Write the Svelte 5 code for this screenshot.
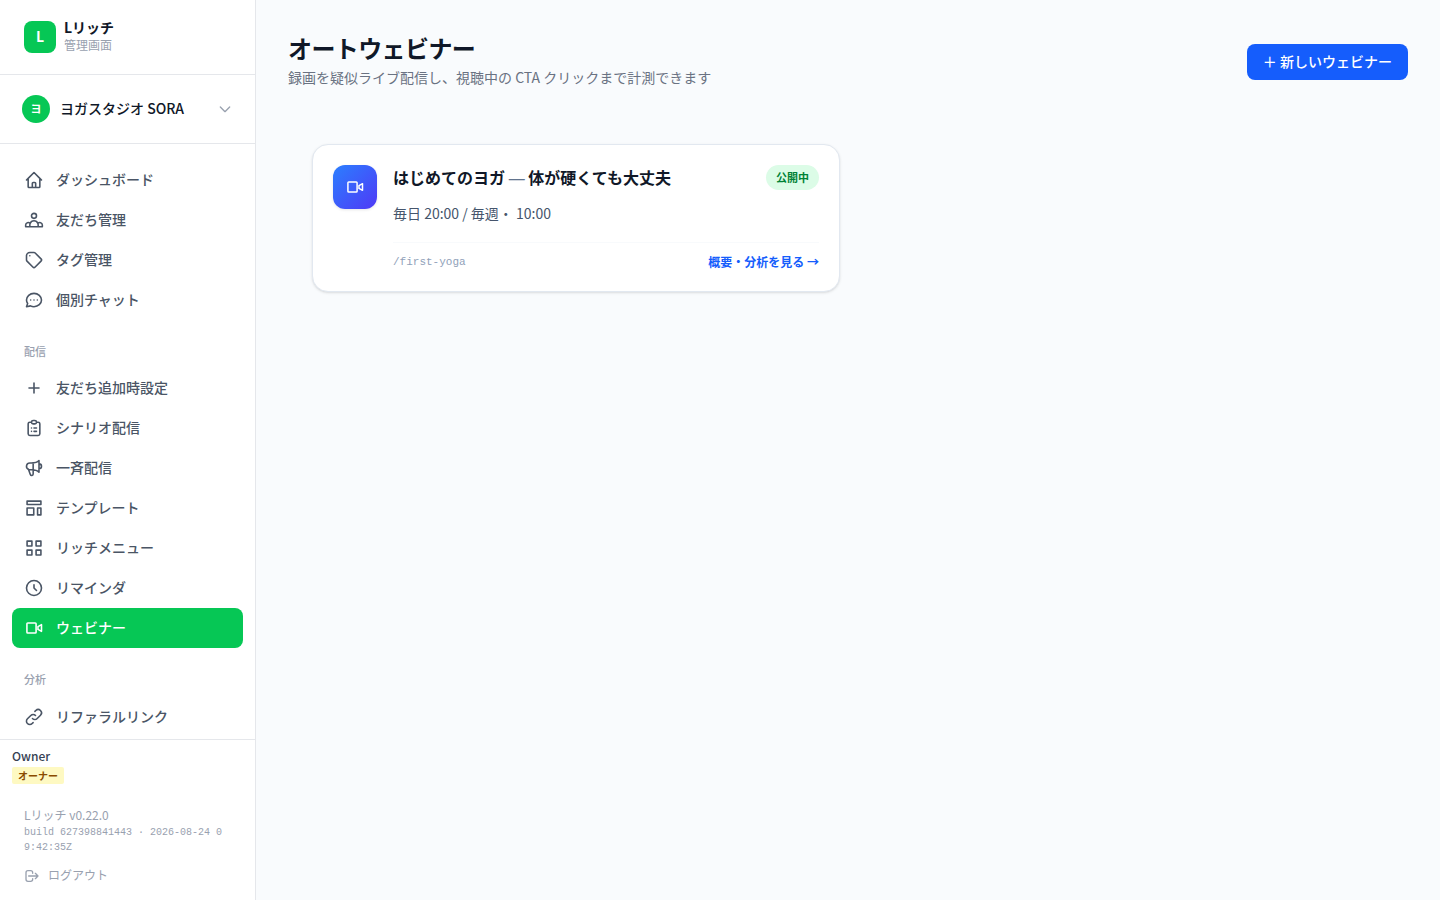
<script>
  const home = [
    { label: "ダッシュボード", d: "M3 12l2-2m0 0l7-7 7 7M5 10v10a1 1 0 001 1h3m10-11l2 2m-2-2v10a1 1 0 01-1 1h-3m-6 0a1 1 0 001-1v-4a1 1 0 011-1h2a1 1 0 011 1v4a1 1 0 001 1m-6 0h6" },
    { label: "友だち管理", d: "M17 20h5v-2a3 3 0 00-5.356-1.857M17 20H7m10 0v-2c0-.656-.126-1.283-.356-1.857M7 20H2v-2a3 3 0 015.356-1.857M7 20v-2c0-.656.126-1.283.356-1.857m0 0a5.002 5.002 0 019.288 0M15 7a3 3 0 11-6 0 3 3 0 016 0z" },
    { label: "タグ管理", d: "M7 7h.01M7 3h5c.512 0 1.024.195 1.414.586l7 7a2 2 0 010 2.828l-7 7a2 2 0 01-2.828 0l-7-7A1.994 1.994 0 013 12V7a4 4 0 014-4z" },
    { label: "個別チャット", d: "M8 12h.01M12 12h.01M16 12h.01M21 12c0 4.418-4.03 8-9 8a9.863 9.863 0 01-4.255-.949L3 20l1.395-3.72C3.512 15.042 3 13.574 3 12c0-4.418 4.03-8 9-8s9 3.582 9 8z" },
  ]
  const video = "M16.800 10.300L21 8v8l-4.200-2.300zM4.500 18h9a1 1 0 001-1V7a1 1 0 00-1-1h-9a1 1 0 00-1 1v10a1 1 0 001 1z"
  const delivery = [
    { label: "友だち追加時設定", d: "M12 6v6m0 0v6m0-6h6m-6 0H6" },
    { label: "シナリオ配信", d: "M9 5H7a2 2 0 00-2 2v12a2 2 0 002 2h10a2 2 0 002-2V7a2 2 0 00-2-2h-2M9 5a2 2 0 002 2h2a2 2 0 002-2M9 5a2 2 0 012-2h2a2 2 0 012 2m-3 7h3m-3 4h3m-6-4h.01M9 16h.01" },
    { label: "一斉配信", d: "M11 5.882V19.24a1.76 1.76 0 01-3.417.592l-2.147-6.15M18 13a3 3 0 100-6M5.436 13.683A4.001 4.001 0 017 6h1.832c4.1 0 7.625-1.234 9.168-3v14c-1.543-1.766-5.067-3-9.168-3H7a3.988 3.988 0 01-1.564-.317z" },
    { label: "テンプレート", d: "M3.700 3.700h16.600v4H3.700zM3.700 12h8v8.300h-8zM16.300 12h4v8.300h-4z" },
    { label: "リッチメニュー", d: "M3.700 3.700h5.800v5.800H3.700zM14.500 3.700h5.800v5.800h-5.800zM3.700 14.500h5.800v5.800H3.700zM14.500 14.500h5.800v5.800h-5.800z" },
    { label: "リマインダ", d: "M12 8v4l3 3m6-3a9 9 0 11-18 0 9 9 0 0118 0z" },
    { label: "ウェビナー", d: video },
  ]
  const analysis = [
    { label: "リファラルリンク", d: "M13.828 10.172a4 4 0 00-5.656 0l-4 4a4 4 0 105.656 5.656l1.102-1.101m-.758-4.899a4 4 0 005.656 0l4-4a4 4 0 00-5.656-5.656l-1.1 1.1" },
  ]
  const groups = [
    { items: home },
    { title: "配信", items: delivery },
    { title: "分析", items: analysis },
  ]
  let active = $state("ウェビナー")
</script>

{#snippet icon(d)}
  <svg viewBox="0 0 24 24" fill="none" stroke="currentColor" stroke-linecap="round" stroke-linejoin="round"><path {d} /></svg>
{/snippet}

<div class="app">
  <aside>
    <div class="brand">
      <div class="logo">L</div>
      <div class="title">
        <p class="name">Lリッチ</p>
        <p class="sub">管理画面</p>
      </div>
    </div>
    <button class="account">
      <span class="avatar">ヨ</span>
      <span class="studio">ヨガスタジオ SORA</span>
      {@render icon("M19 9l-7 7-7-7")}
    </button>
    <nav>
      {#each groups as g}
        {#if g.title}<p class="group">{g.title}</p>{/if}
        {#each g.items as item}
          <button class="item" class:active={active === item.label} onclick={() => (active = item.label)}>
            {@render icon(item.d)}
            <span>{item.label}</span>
          </button>
        {/each}
      {/each}
    </nav>
    <div class="user">
      <p class="owner">Owner</p>
      <span class="role">オーナー</span>
    </div>
    <footer>
      <p class="version">Lリッチ v0.22.0</p>
      <p class="build">build 627398841443 · 2026-08-24 09:42:35Z</p>
      <button class="logout">
        {@render icon("M17 16l4-4m0 0l-4-4m4 4H7m6 4v1a3 3 0 01-3 3H6a3 3 0 01-3-3V7a3 3 0 013-3h4a3 3 0 013 3v1")}
        <span>ログアウト</span>
      </button>
    </footer>
  </aside>

  <main>
    <header>
      <div>
        <h1>オートウェビナー</h1>
        <p>録画を疑似ライブ配信し、視聴中の CTA クリックまで計測できます</p>
      </div>
      <button class="new">＋ 新しいウェビナー</button>
    </header>
    <section class="grid">
      <article>
        <div class="thumb">{@render icon(video)}</div>
        <div class="body">
          <div class="top">
            <h2>はじめてのヨガ <span class="dash">—</span> 体が硬くても大丈夫</h2>
            <span class="badge">公開中</span>
          </div>
          <p class="time">毎日 20:00 / 毎週・ 10:00</p>
          <div class="bottom">
            <span class="slug">/first-yoga</span>
            <span class="more">概要・分析を見る →</span>
          </div>
        </div>
      </article>
    </section>
  </main>
</div>

<style>
  :global(body) {
    font-family: "Noto Sans CJK JP", sans-serif;
    color: #101828;
  }
  .app {
    display: flex;
    height: 100vh;
    background: #f9fbfd;
    overflow: hidden;
  }
  * { box-sizing: border-box; }
  p, h1, h2 { margin: 0; }
  svg { display: block; flex: none; width: 20px; height: 20px; stroke-width: 2; }
  button {
    font: inherit;
    color: inherit;
    border: 0;
    background: none;
    padding: 0;
    text-align: left;
    cursor: pointer;
  }
  aside {
    display: flex;
    flex-direction: column;
    flex: none;
    width: 256px;
    background: #fff;
    border-right: 1px solid #e5e7eb;
  }
  .brand {
    display: flex;
    align-items: center;
    gap: 8px;
    height: 75px;
    flex: none;
    padding: 0 24px;
    border-bottom: 1px solid #e5e7eb;
  }
  .title { padding-bottom: 2px; }
  .logo {
    width: 32px;
    height: 32px;
    border-radius: 8px;
    background: #06c755;
    color: #fff;
    font-size: 14px;
    font-weight: 700;
    line-height: 31px;
    text-align: center;
  }
  .name { font-size: 14px; font-weight: 700; line-height: 17.5px; }
  .sub { font-size: 12px; line-height: 16px; color: #99a1af; }
  .account {
    display: flex;
    align-items: center;
    height: 69px;
    flex: none;
    padding: 0 22px;
    border-bottom: 1px solid #e5e7eb;
  }
  .avatar {
    width: 28px;
    height: 28px;
    border-radius: 50%;
    background: #06c755;
    color: #fff;
    font-size: 11px;
    font-weight: 700;
    line-height: 26px;
    text-align: center;
  }
  .studio {
    flex: 1;
    margin-left: 10px;
    padding-bottom: 2px;
    font-size: 14px;
    font-weight: 500;
    line-height: 20px;
  }
  .account svg { width: 16px; height: 16px; color: #99a1af; }
  nav {
    flex: 1;
    min-height: 0;
    padding: 16px 12px 0;
    overflow: hidden;
  }
  .item {
    display: flex;
    align-items: center;
    gap: 12px;
    width: 100%;
    height: 40px;
    padding: 0 12px;
    border-radius: 8px;
    font-size: 14px;
    font-weight: 500;
    line-height: 20px;
    color: #4a5565;
  }
  .item span { padding-bottom: 2px; }
  .item svg { stroke-width: 1.9; }
  .item.active { background: #06c755; color: #fff; }
  .group {
    padding: 23px 12px 9px;
    font-size: 11px;
    font-weight: 500;
    line-height: 16.4px;
    color: #99a1af;
  }
  .user {
    flex: none;
    height: 56px;
    padding: 8px 12px;
    border-top: 1px solid #e5e7eb;
  }
  .owner { font-size: 12px; font-weight: 500; line-height: 16px; color: #364153; }
  .role {
    display: block;
    width: fit-content;
    margin-top: 3px;
    padding: 0 6px;
    border-radius: 2px;
    background: #fef9c2;
    color: #894b00;
    font-size: 10px;
    font-weight: 700;
    line-height: 17px;
  }
  footer {
    flex: none;
    height: 105px;
    padding: 12px 24px 0;
    color: #99a1af;
  }
  .version { font-size: 12px; line-height: 16px; }
  .build {
    margin-top: 2px;
    font-family: "Liberation Mono", monospace;
    font-size: 10px;
    line-height: 15px;
    word-break: break-all;
  }
  .logout {
    display: flex;
    align-items: center;
    gap: 8px;
    margin-top: 12px;
    font-size: 12px;
    line-height: 16px;
  }
  .logout span { padding-bottom: 1px; }
  .logout svg { width: 16px; height: 16px; }
  main { flex: 1; padding: 32px; }
  header {
    display: flex;
    align-items: center;
    justify-content: space-between;
  }
  h1 { font-size: 24px; font-weight: 700; line-height: 32px; letter-spacing: -0.025em; }
  header p { margin: 3px 0 1px; font-size: 14px; line-height: 20px; color: #6a7282; }
  .new {
    height: 36px;
    margin-top: 3px;
    padding: 0 16px 2px;
    border-radius: 8px;
    background: #155dfc;
    color: #fff;
    font-size: 14px;
    font-weight: 500;
  }
  .grid {
    display: grid;
    grid-template-columns: 1fr 1fr;
    gap: 16px;
    padding: 56px 24px 0;
  }
  article {
    display: flex;
    gap: 16px;
    height: 148px;
    padding: 20px;
    border: 1px solid #e2e8f0;
    border-radius: 16px;
    background: #fff;
    box-shadow: 0 1px 3px rgb(0 0 0 / 0.1), 0 1px 2px -1px rgb(0 0 0 / 0.1);
  }
  .thumb {
    display: grid;
    place-items: center;
    flex: none;
    width: 44px;
    height: 44px;
    border-radius: 12px;
    background: linear-gradient(to bottom right, #2b7fff, #4f39f6);
    color: #fff;
    box-shadow: 0 1px 3px rgb(0 0 0 / 0.1);
  }
  .thumb svg { stroke-width: 1.8; }
  .body { flex: 1; }
  .top { display: flex; justify-content: space-between; align-items: flex-start; }
  h2 { font-size: 16px; font-weight: 700; line-height: 24px; }
  .dash { font-family: "Liberation Sans", sans-serif; font-weight: 400; line-height: 1; color: #62748e; }
  .badge {
    padding: 0 10px;
    border-radius: 13px;
    background: #dcfce7;
    color: #008236;
    font-size: 11px;
    font-weight: 700;
    line-height: 24.5px;
  }
  .time { margin-top: 13.5px; font-size: 14px; line-height: 20px; color: #45556c; }
  .bottom {
    display: flex;
    align-items: center;
    justify-content: space-between;
    margin-top: 19px;
    padding-top: 11px;
    border-top: 1px solid #f8fafc;
  }
  .slug { font-family: "Liberation Mono", monospace; font-size: 11px; color: #90a1b9; }
  .more { font-size: 12px; font-weight: 700; line-height: 16px; color: #155dfc; }
</style>
